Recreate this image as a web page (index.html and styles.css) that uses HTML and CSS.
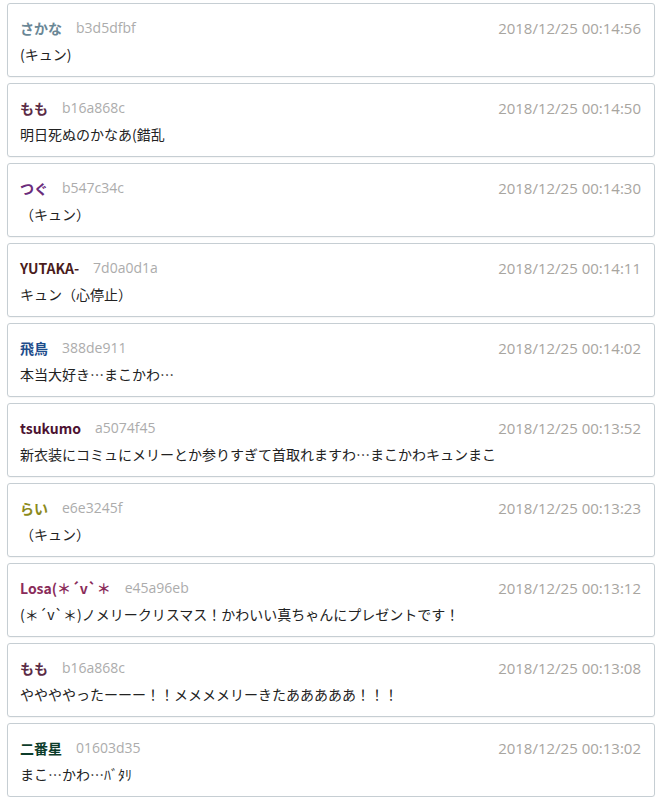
FILE: index.html
```html
<!DOCTYPE html>
<html lang="ja">
<head>
<meta charset="utf-8">
<link rel="stylesheet" href="styles.css">
</head>
<body>
<div class="list">
  <div class="card"><div class="head"><span class="name c-sakana">さかな</span><span class="hash">b3d5dfbf</span><span class="date">2018/12/25 00:14:56</span></div><div class="msg">(キュン)</div></div>
  <div class="card"><div class="head"><span class="name c-momo">もも</span><span class="hash">b16a868c</span><span class="date">2018/12/25 00:14:50</span></div><div class="msg">明日死ぬのかなあ(錯乱</div></div>
  <div class="card"><div class="head"><span class="name c-tsugu">つぐ</span><span class="hash">b547c34c</span><span class="date">2018/12/25 00:14:30</span></div><div class="msg">（キュン）</div></div>
  <div class="card"><div class="head"><span class="name c-yutaka">YUTAKA-</span><span class="hash">7d0a0d1a</span><span class="date">2018/12/25 00:14:11</span></div><div class="msg">キュン（心停止）</div></div>
  <div class="card"><div class="head"><span class="name c-asuka">飛鳥</span><span class="hash">388de911</span><span class="date">2018/12/25 00:14:02</span></div><div class="msg">本当大好き…まこかわ…</div></div>
  <div class="card"><div class="head"><span class="name c-tsukumo">tsukumo</span><span class="hash">a5074f45</span><span class="date">2018/12/25 00:13:52</span></div><div class="msg">新衣装にコミュにメリーとか参りすぎて首取れますわ…まこかわキュンまこ</div></div>
  <div class="card"><div class="head"><span class="name c-rai">らい</span><span class="hash">e6e3245f</span><span class="date">2018/12/25 00:13:23</span></div><div class="msg">（キュン）</div></div>
  <div class="card"><div class="head"><span class="name c-losa">Losa(＊´v`＊</span><span class="hash">e45a96eb</span><span class="date">2018/12/25 00:13:12</span></div><div class="msg">(＊´v`＊)ノメリークリスマス！かわいい真ちゃんにプレゼントです！</div></div>
  <div class="card"><div class="head"><span class="name c-momo">もも</span><span class="hash">b16a868c</span><span class="date">2018/12/25 00:13:08</span></div><div class="msg">ややややったーーー！！メメメメリーきたあああああ！！！</div></div>
  <div class="card"><div class="head"><span class="name c-niban">二番星</span><span class="hash">01603d35</span><span class="date">2018/12/25 00:13:02</span></div><div class="msg">まこ…かわ…ﾊﾞﾀﾘ</div></div>
</div>
</body>
</html>
```
FILE: styles.css
```css
html, body {
  margin: 0;
  padding: 0;
  background: #fff;
}
body {
  font-family: "Open Sans", "Noto Sans CJK JP", sans-serif;
  font-size: 14px;
  color: #333;
}
.list {
  padding: 3px 10px 0 7px;
  display: flex;
  flex-direction: column;
  gap: 6px;
}
.card {
  border: 1px solid #c6ced3;
  border-radius: 3px;
  padding: 14px 12px 12px 12px;
  display: flex;
  flex-direction: column;
  gap: 6px;
  box-shadow: 0 1px 1px rgba(0,0,0,0.04);
}
.head {
  display: flex;
  align-items: center;
  height: 20px;
  line-height: 20px;
}
.name {
  font-family: "Noto Sans CJK JP", "Open Sans", sans-serif;
  font-weight: bold;
  margin-right: 14px;
}
.hash {
  color: #acacac;
}
.date {
  margin-left: auto;
  margin-right: 1px;
  font-size: 15px;
  color: #a8a59f;
}
.msg {
  font-family: "Noto Sans CJK JP", sans-serif;
  height: 20px;
  line-height: 20px;
  color: #222;
  white-space: nowrap;
}
.c-sakana { color: #6a8796; }
.c-momo { color: #5b2b45; }
.c-tsugu { color: #6b2c7c; }
.c-yutaka { color: #4a1c1c; }
.c-asuka { color: #1e4d8c; }
.c-tsukumo { color: #4c1232; }
.c-rai { color: #8c8a1c; }
.c-losa { color: #8a2c5a; }
.c-niban { color: #0c3c2a; }
```
